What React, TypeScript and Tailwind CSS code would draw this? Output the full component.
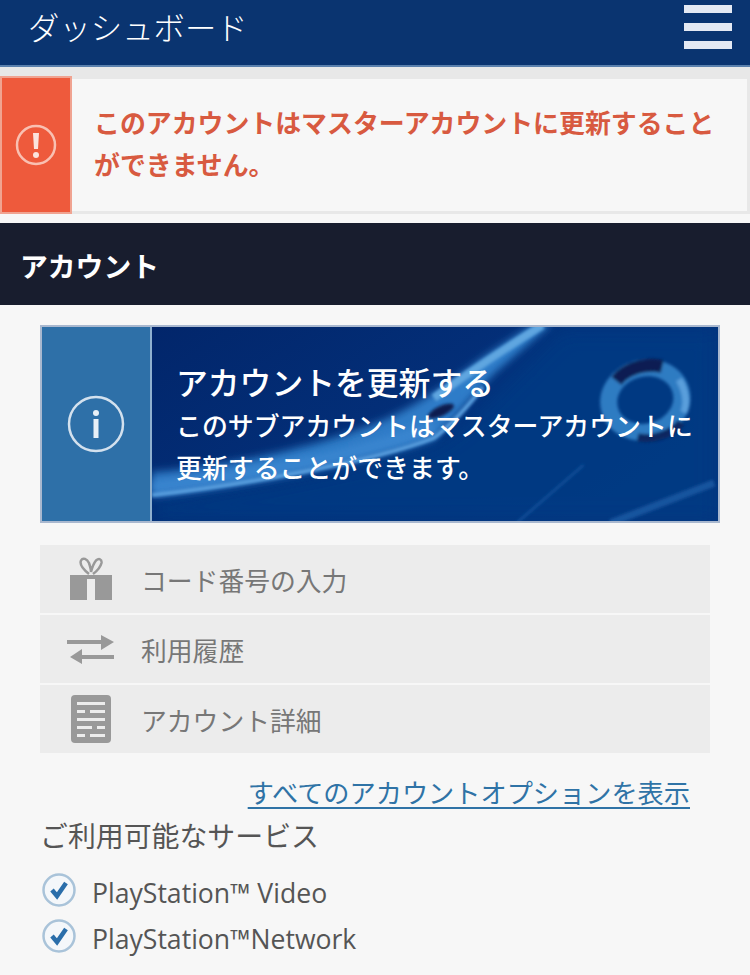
function GiftIcon() {
  return (
    <svg width="44" height="44" viewBox="0 0 44 44" fill="none" className="blur-[0.5px]">
      <path d="M20 17C15 13 10 8 12 3.500C14 0 18 2 20 6C21 9 22 12 22 15C23 11 25 6 27 3.500C30 1 33 2 32.500 6C31.500 10 28 14 24 17" stroke="#999" strokeWidth="2.500" />
      <path d="M1 18H43V43H26V22H18V43H1Z" fill="#999" />
    </svg>
  )
}

function ArrowsIcon() {
  return (
    <svg width="47" height="29" viewBox="0 0 47 29" fill="#999" className="blur-[0.5px]">
      <path d="M0 5H34V0L47 7L34 15V9H0Z" />
      <path d="M47 20H15V14L3 22L15 29V24H47Z" />
    </svg>
  )
}

function DetailIcon() {
  return (
    <svg width="40" height="48" viewBox="0 0 40 48" className="blur-[0.5px]">
      <rect width="40" height="48" rx="4" fill="#999" />
      <g fill="#ececec">
        <rect x="6" y="7" width="28" height="3" />
        <rect x="6" y="15" width="8" height="3" />
        <rect x="19" y="15" width="15" height="3" />
        <rect x="6" y="23" width="28" height="3" />
        <rect x="6" y="31" width="15" height="3" />
        <rect x="26" y="31" width="8" height="3" />
        <rect x="6" y="39" width="8" height="3" />
        <rect x="19" y="39" width="15" height="3" />
      </g>
    </svg>
  )
}

function CheckIcon() {
  return (
    <svg width="34" height="34" viewBox="0 0 34 34" fill="none" className="shrink-0">
      <circle cx="17" cy="17" r="15.500" fill="#f4f7fa" stroke="#a9c3d9" strokeWidth="2.500" />
      <path d="M10 17L15 23L24 10" stroke="#2a6eaa" strokeWidth="4.500" />
    </svg>
  )
}

// PS style wave + ring behind the banner text
function BannerArt() {
  return (
    <svg className="absolute inset-0 h-full w-full" viewBox="0 0 568 194" preserveAspectRatio="none">
      <defs>
        <linearGradient id="bannerBg" x1="0" y1="0" x2="1" y2="0.5">
          <stop offset="0" stopColor="#02266b" />
          <stop offset="0.6" stopColor="#03307a" />
          <stop offset="1" stopColor="#05367f" />
        </linearGradient>
        <linearGradient id="ribbon" x1="0" y1="0" x2="1" y2="0">
          <stop offset="0" stopColor="#2a74c0" />
          <stop offset="1" stopColor="#2f7fcb" />
        </linearGradient>
        <filter id="soft" x="-20%" y="-20%" width="140%" height="140%"><feGaussianBlur stdDeviation="1.500" /></filter>
        <filter id="mid" x="-20%" y="-20%" width="140%" height="140%"><feGaussianBlur stdDeviation="4" /></filter>
        <filter id="softer" x="-20%" y="-20%" width="140%" height="140%"><feGaussianBlur stdDeviation="10" /></filter>
      </defs>
      <rect width="568" height="194" fill="url(#bannerBg)" />
      <path d="M0 172C90 162 220 138 283 114C320 92 350 60 410 0L568 0L568 194L0 194Z" fill="#063a84" opacity="0.8" filter="url(#softer)" />
      <path d="M0 145C70 140 170 120 235 92C262 80 290 62 333 30L385 -4L402 -4L345 45C320 70 300 95 283 112C220 135 90 160 0 170Z" fill="url(#ribbon)" filter="url(#mid)" />
      <path d="M0 160C90 150 210 128 283 100" stroke="#3a86d0" strokeWidth="12" fill="none" filter="url(#mid)" />
      <path d="M0 168C90 158 220 135 283 111C300 98 318 78 332 60" stroke="#5aa0e0" strokeWidth="4" fill="none" filter="url(#soft)" />
      <path d="M283 71C300 58 350 24 392 -2" stroke="#5fa6e0" strokeWidth="8" fill="none" filter="url(#soft)" />
      <ellipse cx="290" cy="84" rx="14" ry="5" transform="rotate(-25 290 84)" fill="#0a1c50" filter="url(#soft)" />
      <path d="M366 196L433 138" stroke="#14559f" strokeWidth="2" fill="none" filter="url(#soft)" />
      <path d="M460 196L564 156" stroke="#14559f" strokeWidth="7" fill="none" filter="url(#soft)" />
      <g transform="rotate(-15 495 73)" filter="url(#soft)">
        <ellipse cx="495" cy="73" rx="37" ry="32" fill="none" stroke="#2f7cc2" strokeWidth="17" />
        <path d="M472 47C484 38 505 37 520 45" stroke="#0b1b52" strokeWidth="13" fill="none" />
        <path d="M478 107C492 114 512 113 524 104" stroke="#0a2560" strokeWidth="8" fill="none" />
        <path d="M533 62C537 75 535 88 529 95" stroke="#5a9fdc" strokeWidth="7" fill="none" />
      </g>
    </svg>
  )
}

const menuRows = [
  { label: "コード番号の入力", icon: <GiftIcon /> },
  { label: "利用履歴", icon: <ArrowsIcon /> },
  { label: "アカウント詳細", icon: <DetailIcon /> },
]

export default function App() {
  return (
    <div className="h-[975px] w-[750px] overflow-hidden bg-[#f7f7f7] font-['Noto_Sans_CJK_JP','Noto_Sans',sans-serif]">
      {/* Header */}
      <header className="flex h-[67px] items-start justify-between border-b-2 border-[#5a80ad] bg-[#0a3470] pl-[28px] pr-[18px]">
        <h1 className="text-[31.400px] font-light leading-[54px] text-white">ダッシュボード</h1>
        <div className="mt-[5px] flex w-[48px] flex-col gap-[10px]">
          <span className="h-[8px] bg-[#e4e9f3]" />
          <span className="h-[8px] bg-[#e4e9f3]" />
          <span className="h-[8px] bg-[#e4e9f3]" />
        </div>
      </header>

      {/* Alert */}
      <div className="bg-[#e8e8e8] pt-[9px]">
        <div className="flex h-[138px] bg-[#f7f7f7]">
          <div className="flex w-[72px] shrink-0 items-center justify-center border-2 border-[#f0a391] bg-[#ee5a3c]">
            <svg width="42" height="42" viewBox="0 0 42 42" fill="none">
              <circle cx="21" cy="21" r="19" stroke="#f9c0b2" strokeWidth="2.500" />
              <path d="M18 9H24L23 25H19Z" fill="#fbe3dd" />
              <circle cx="21" cy="31" r="3" fill="#fbe3dd" />
            </svg>
          </div>
          <div className="flex flex-1 items-center border-y-[3px] border-r-[3px] border-[#e8e8e8] pb-[4px] pl-[22px]">
            <p className="w-[625px] text-[25.900px] font-bold leading-[42px] text-[#d85a40]">
              このアカウントはマスターアカウントに更新することができません。
            </p>
          </div>
        </div>
      </div>

      {/* Section title */}
      <div className="mt-[9px] flex h-[82px] items-center bg-[#181d2e] pl-[20px] pt-[3px]">
        <h2 className="text-[27.800px] font-bold text-white">アカウント</h2>
      </div>

      <main className="px-[40px] pt-[20px]">
        {/* Upgrade banner */}
        <div className="flex h-[198px] w-[680px] border-2 border-[#a9b8cf]">
          <div className="flex w-[110px] shrink-0 items-center justify-center border-r-2 border-[#8fb0cf] bg-[#2e70a8]">
            <svg width="58" height="58" viewBox="0 0 58 58" fill="none">
              <circle cx="29" cy="29" r="27" stroke="#d3e1ee" strokeWidth="2.500" />
              <circle cx="29" cy="18" r="3" fill="#e8f0f7" />
              <rect x="26.500" y="24" width="5" height="19" fill="#e8f0f7" />
            </svg>
          </div>
          <div className="relative flex-1 overflow-hidden">
            <BannerArt />
            <div className="relative pl-[24px] pt-[31px] text-white">
              <p className="text-[31.800px] font-medium leading-[46px]">アカウントを更新する</p>
              <p className="w-[530px] text-[25.900px] font-medium leading-[42px]">
                このサブアカウントはマスターアカウントに更新することができます。
              </p>
            </div>
          </div>
        </div>

        {/* Menu */}
        <ul className="mt-[22px] flex w-[670px] flex-col gap-[2px]">
          {menuRows.map((row) => (
            <li key={row.label} className="flex h-[68px] items-center bg-[#ececec] text-[25.800px] text-[#777]">
              <span className="flex w-[101px] justify-center">{row.icon}</span>
              <span className="mt-[2px]">{row.label}</span>
            </li>
          ))}
        </ul>

        <div className="mt-[19px] w-[650px] text-right text-[26.200px] leading-[40px] text-[#2f73a6] underline underline-offset-[4px]">
          すべてのアカウントオプションを表示
        </div>

        <h3 className="mt-[3px] text-[27.900px] leading-[40px] text-[#555]">ご利用可能なサービス</h3>

        <ul className="ml-[2px] mt-[18px] flex flex-col gap-[12px] font-['Open_Sans',sans-serif] text-[26.600px] text-[#555]">
          <li className="flex h-[34px] items-center gap-[16px]"><CheckIcon /><span className="mt-[8px]">PlayStation™ Video</span></li>
          <li className="flex h-[34px] items-center gap-[16px]"><CheckIcon /><span className="mt-[8px]">PlayStation™Network</span></li>
        </ul>
      </main>
    </div>
  )
}
